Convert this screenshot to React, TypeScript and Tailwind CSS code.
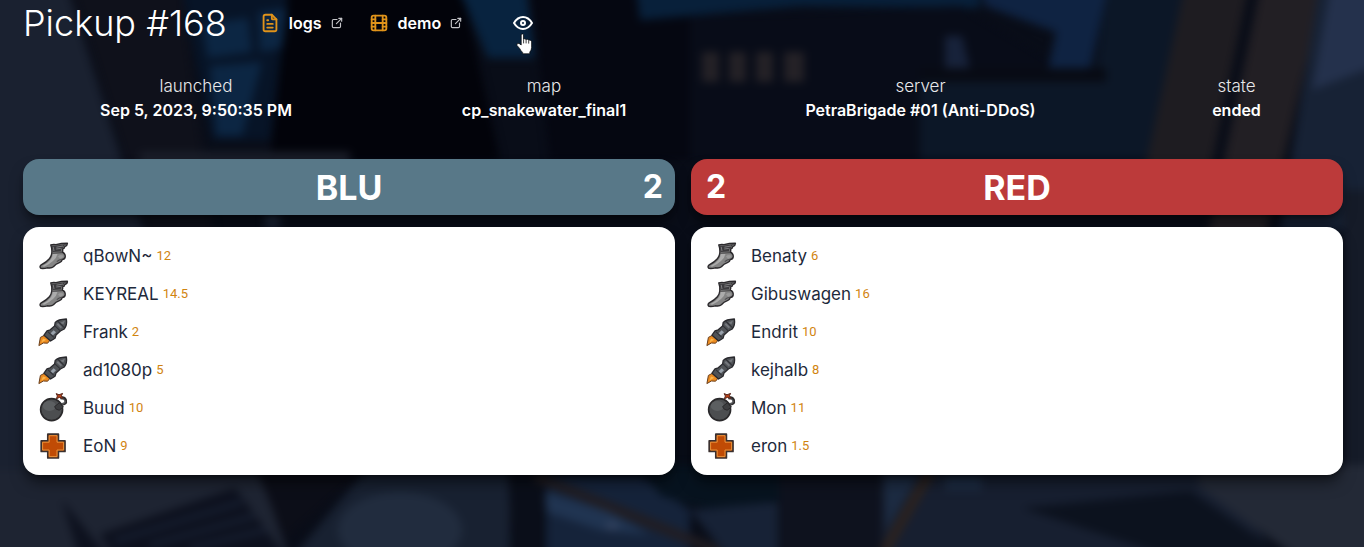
import React from "react";
import { TbExternalLink, TbEye, TbFileText, TbMovie } from "react-icons/tb";

type GameClass = "scout" | "soldier" | "demoman" | "medic";

interface Player {
  name: string;
  score: string;
  gameClass: GameClass;
}

const blu: Player[] = [
  { name: "qBowN~", score: "12", gameClass: "scout" },
  { name: "KEYREAL", score: "14.5", gameClass: "scout" },
  { name: "Frank", score: "2", gameClass: "soldier" },
  { name: "ad1080p", score: "5", gameClass: "soldier" },
  { name: "Buud", score: "10", gameClass: "demoman" },
  { name: "EoN", score: "9", gameClass: "medic" },
];

const red: Player[] = [
  { name: "Benaty", score: "6", gameClass: "scout" },
  { name: "Gibuswagen", score: "16", gameClass: "scout" },
  { name: "Endrit", score: "10", gameClass: "soldier" },
  { name: "kejhalb", score: "8", gameClass: "soldier" },
  { name: "Mon", score: "11", gameClass: "demoman" },
  { name: "eron", score: "1.5", gameClass: "medic" },
];

const details = [
  { label: "launched", value: "Sep 5, 2023, 9:50:35 PM" },
  { label: "map", value: "cp_snakewater_final1" },
  { label: "server", value: "PetraBrigade #01 (Anti-DDoS)" },
  { label: "state", value: "ended" },
];

function ScoutIcon() {
  return (
    <>
      <path
        d="M12.8 4 Q15 3 18 3.6 Q23 2.2 29.4 2.2 Q29.6 4.4 26.8 5.6 Q26.8 7.4 24.6 8 Q25 9.8 24.2 11 Q27.6 12.6 27.2 16 Q26.8 18.2 24 18.6 Q24 20.8 21.4 21.6 Q17.8 22.8 15.4 25.8 Q13.4 27.6 9.4 26.8 Q6 27.8 3 27.4 Q1.2 26 2.8 24.2 Q8.6 21.2 11.4 17.8 Q13.4 15.4 13.8 12 Q14.2 7.6 12.8 4 Z"
        fill="#858585"
        stroke="#2b292c"
        strokeWidth="1.4"
        strokeLinejoin="round"
      />
      <path d="M13.6 4.6 L18 4.4 L28.4 3 L25.6 5.2 L25.4 6.8 L23.4 7.6 L23.2 10.4 L14.6 11 Z" fill="#3c3b3e" />
      <path d="M15.2 5.8 L16 10 M18.4 6.2 L25 5 M18.2 8 L22.8 7.4" stroke="#858487" strokeWidth="0.9" fill="none" />
      <path d="M4.4 25 Q10 22.2 12.8 18.4 Q14.6 16 14.8 13 H19.4 Q18.6 17.2 15 20 Q10.6 23.8 6 25.8 Z" fill="#acacac" />
      <path d="M20 15.4 Q22.6 12.8 25.6 15 Q25 17.2 22 17.8 Z" fill="#9a9a9a" />
      <path d="M14.2 12.2 L24 11.6 M18.8 20.6 Q21 18.6 24 18.4" stroke="#4c4b4d" strokeWidth="1.1" fill="none" />
    </>
  );
}

function SoldierIcon() {
  return (
    <>
      <path
        d="M0.9 28.6 L2.4 20.4 L6.6 18.2 L12.2 23 L9.6 26.2 L5.4 26 Z"
        fill="#ec8b20"
        stroke="#6a3f1c"
        strokeWidth="1"
        strokeLinejoin="round"
      />
      <path d="M3.4 25.6 L5 21.6 L8.4 22.8 Z" fill="#fbb64c" />
      <path
        d="M6 18.2 L9 13.8 L12.2 12.8 L16.6 9 L17.2 5.4 Q20 2.4 28.4 2 Q29.4 8 26.2 12 L22.4 14 L18 18 L17 21.2 L12.6 24 Z"
        fill="#505357"
        stroke="#29292d"
        strokeWidth="1.3"
        strokeLinejoin="round"
      />
      <path d="M9.8 14.6 L15.8 20.4 M17 8.8 L22.2 13.8 M19.6 4 L26.6 10.8" stroke="#303237" strokeWidth="1.1" />
      <path d="M12.6 16.2 L15.6 13.2 L18 15.2 L15 18.2 Z" fill="#98a1ab" />
      <path d="M22.4 5.8 L27 3.4 L25.4 7.4 Z M18.6 7.4 L20 6 L24 10 L22.8 11.4 Z" fill="#74777c" />
    </>
  );
}

function DemomanIcon() {
  return (
    <>
      <circle cx="13.6" cy="16.6" r="11" fill="#4c4e50" stroke="#2a292b" strokeWidth="1.6" />
      <ellipse cx="11.4" cy="13" rx="6.6" ry="5" fill="#5c5f61" />
      <path d="M16.6 13.6 L21.4 9.8 L25.4 14 L21.2 17.2 Q17.6 17 16.6 13.6 Z" fill="#3d3e40" stroke="#2a292b" strokeWidth="1" />
      <path d="M23.4 11.4 Q28.6 11.4 27.6 7.2 Q26 3.8 22.2 5.2" fill="none" stroke="#2c2a2b" strokeWidth="2.8" />
      <path d="M24 11 Q27.6 10.8 27 7.8 Q26 5.4 23.4 5.8" fill="none" stroke="#75777a" strokeWidth="0.9" />
      <path d="M18.2 0.6 L21 1.8 L24.6 0.4 L23.4 2.8 L24.8 5.4 L21.4 4.4 L18.4 5.8 L19.4 3 Z" fill="#bb4218" stroke="#54261c" strokeWidth="1" />
    </>
  );
}

function MedicIcon() {
  return (
    <>
      <path
        d="M9.8 3.2 H20.4 V9.8 H27 V20.4 H20.4 V27 H9.8 V20.4 H3.2 V9.8 H9.8 Z"
        fill="#c04b05"
        stroke="#3a302f"
        strokeWidth="1.7"
        strokeLinejoin="round"
      />
      <path
        d="M11.2 4.7 H19 V11.2 H25.6 V19 H19 V25.6 H11.2 V19 H4.6 V11.2 H11.2 Z"
        fill="none"
        stroke="#e8923a"
        strokeWidth="1"
      />
    </>
  );
}

const classIcons: Record<GameClass, () => React.JSX.Element> = {
  scout: ScoutIcon,
  soldier: SoldierIcon,
  demoman: DemomanIcon,
  medic: MedicIcon,
};

function PlayerRow({ player }: { player: Player }) {
  const Icon = classIcons[player.gameClass];
  return (
    <li className="flex h-[38px] items-center gap-[15px]">
      <svg viewBox="0 0 30 30" className="size-[30px] shrink-0 overflow-visible" role="img" aria-label={player.gameClass}>
        <Icon />
      </svg>
      <span className="flex items-center gap-1">
        <a href="#player" className="text-[17px] leading-6 text-[#1e293b]">
          {player.name}
        </a>
        <span className="font-[Roboto,sans-serif] text-[13px] leading-6 text-[#d18410]">{player.score}</span>
      </span>
    </li>
  );
}

function PlayerList({ players }: { players: Player[] }) {
  return (
    <ul className="rounded-2xl bg-white px-[15px] py-[10px] shadow-lg shadow-black/50">
      {players.map((player) => (
        <PlayerRow key={player.name} player={player} />
      ))}
    </ul>
  );
}

function Backdrop() {
  return (
    <svg
      viewBox="0 0 1364 547"
      preserveAspectRatio="xMidYMid slice"
      className="absolute inset-0 -z-10 h-full w-full"
      aria-hidden="true"
    >
      <defs>
        <filter id="soft" x="-5%" y="-5%" width="110%" height="110%" colorInterpolationFilters="sRGB">
          <feGaussianBlur stdDeviation="4" />
        </filter>
      </defs>
      <rect width="1364" height="547" fill="#090d18" />
      <g filter="url(#soft)">
        <path d="M-20 -20 H65 L150 250 V560 H-20 Z" fill="#1a2130" />
        <path d="M70 -20 H180 L215 240 H150 Z" fill="#0f111b" />
        <path d="M180 -20 H290 L270 140 H212 Z" fill="#071427" />
        <path d="M202 24 L248 18 L252 52 L208 58 Z M258 12 L288 8 L282 48 L260 52 Z M210 66 L262 62 L242 136 L216 136 Z" fill="#0c2643" />
        <path d="M290 -20 H460 L500 160 H270 Z" fill="#02030a" />
        <path d="M455 -20 H525 L535 58 H488 Z" fill="#08233f" />
        <path d="M530 -20 H690 V160 H550 Z" fill="#050711" />
        <path d="M635 -20 H980 V8 L800 6 L640 20 Z" fill="#08203a" />
        <path d="M690 16 L960 6 L1050 60 V160 H690 Z" fill="#080c18" />
        <path d="M980 -20 H1110 L1090 70 H1048 L1056 32 L985 6 Z" fill="#0f2342" />
        <path d="M945 36 H962 L970 70 H945 Z" fill="#17223a" />
        <path d="M1108 -20 H1190 L1150 160 H920 V82 L1095 76 Z" fill="#0c1727" />
        <path d="M920 68 H1106 V82 H920 Z" fill="#080b14" />
        <path d="M1186 -20 H1250 L1202 210 H1136 Z" fill="#1e1c21" />
        <path d="M1262 -20 H1326 L1262 250 H1205 Z" fill="#221f24" />
        <path d="M1320 -20 H1390 V230 H1280 Z" fill="#172235" />
        <path d="M1332 -20 H1390 V60 L1312 90 Z" fill="#24314c" />
        <g fill="#242126">
          <rect x="702" y="52" width="17" height="30" />
          <rect x="729" y="52" width="17" height="30" />
          <rect x="756" y="52" width="17" height="30" />
          <rect x="784" y="52" width="20" height="30" />
        </g>
        <path d="M140 152 H350 V165 H140 Z" fill="#1a1e29" />
        <path d="M265 212 H280 V228 H265 Z" fill="#1c2638" />
        <path d="M-20 470 H260 L290 560 H-20 Z" fill="#1e2432" />
        <path d="M100 534 L235 488 L288 560 H115 Z M62 500 L110 560 H80 Z" fill="#0d111e" />
        <path d="M115 541 L242 502 M150 545 L255 516 M190 548 L266 530" stroke="#192235" strokeWidth="4" />
        <path d="M255 465 H370 L285 540 Z" fill="#0c0e18" />
        <path d="M370 465 H510 V560 H290 Z" fill="#182131" />
        <ellipse cx="400" cy="530" rx="62" ry="38" fill="#212c3e" />
        <path d="M508 465 H545 V560 H512 Z" fill="#0a0e19" />
        <path d="M546 475 H640 L690 510 V560 H546 Z" fill="#15233a" />
        <path d="M545 492 L610 512 L650 535 L600 530 L546 512 Z" fill="#203451" />
        <path d="M535 476 L720 552" stroke="#211d22" strokeWidth="10" />
        <ellipse cx="612" cy="526" rx="7" ry="4" fill="#33425e" />
        <path d="M640 465 H780 V500 Q715 518 660 495 Z" fill="#07131f" />
        <path d="M690 510 L778 502 V560 H730 Z" fill="#172236" />
        <path d="M779 465 H882 V560 H779 Z" fill="#0e121e" />
        <path d="M882 465 H1210 L1280 560 H882 Z" fill="#171f30" />
        <path d="M884 475 H918 L886 530 Z M945 475 H982 V490 H945 Z" fill="#1c2b42" />
        <path d="M930 472 L884 552" stroke="#2b221f" strokeWidth="10" />
        <path d="M1022 508 L1190 491 L1290 560 H1180 Z" fill="#0c121e" />
        <path d="M1200 465 H1390 V560 H1300 L1198 486 Z" fill="#232936" />
        <path d="M1343 190 H1390 V465 H1343 Z" fill="#151b28" />
      </g>
    </svg>
  );
}

function HandPointer() {
  return (
    <svg viewBox="0 0 17 22" className="pointer-events-none absolute top-[22px] left-[5px] h-[22px] w-[17px]" aria-hidden="true">
      <path
        d="M5.2 1.6 Q6.4 0.2 7.5 1.6 V6.2 Q8.8 5.2 10 6.6 Q11.4 5.6 12.6 7.2 Q14.2 6.6 15.6 8.4 V14.6 Q15.4 17.6 13.8 19 V20.8 H6.6 V19.4 Q5 18 3.6 15.4 L0.8 12.2 Q0.6 10 3 10.4 L5.2 12 Z"
        fill="#fff"
        stroke="#000"
        strokeWidth="0.7"
      />
      <path d="M7.6 6.4 V10.4 M10.1 7 V10.4 M12.7 7.6 V10.6" stroke="#111" strokeWidth="0.8" />
    </svg>
  );
}

export default function App() {
  return (
    <main className="relative isolate min-h-screen overflow-hidden pr-[21px] pb-8 pl-[23px] font-[Inter,sans-serif] text-white">
      <Backdrop />
      <header className="flex h-[46px] items-center">
        <h1 className="text-[36px] leading-[46px] font-light">Pickup #168</h1>
        <nav className="ml-8 flex items-center gap-6 font-semibold">
          <a href="#logs" className="flex items-center gap-2">
            <TbFileText size={22} className="text-[#e0931a]" />
            <span>logs</span>
            <TbExternalLink size={14} className="text-[#c4c4c8]" />
          </a>
          <a href="#demo" className="flex items-center gap-2">
            <TbMovie size={22} className="text-[#e0931a]" />
            <span>demo</span>
            <TbExternalLink size={14} className="text-[#c4c4c8]" />
          </a>
        </nav>
        <button type="button" aria-label="Show details" className="relative ml-12">
          <TbEye size={24} />
          <HandPointer />
        </button>
      </header>

      <dl className="mt-7 grid grid-cols-[346fr_334fr_403fr_213fr] gap-2 text-center leading-6">
        {details.map(({ label, value }) => (
          <div key={label}>
            <dt className="text-[17px] leading-6 font-light text-[#e8e8ea]">{label}</dt>
            <dd className="font-semibold">{value}</dd>
          </div>
        ))}
      </dl>

      <div className="mt-[37px] grid grid-cols-2 gap-4">
        <section className="grid gap-3">
          <h2 className="grid h-14 grid-cols-[1fr_auto_1fr] items-center rounded-2xl bg-[#587888] px-3 text-[32px] font-bold shadow-lg shadow-black/50">
            <span className="col-start-2 text-[34px]">BLU</span>
            <span className="text-right">2</span>
          </h2>
          <PlayerList players={blu} />
        </section>
        <section className="grid gap-3">
          <h2 className="grid h-14 grid-cols-[1fr_auto_1fr] items-center rounded-2xl bg-[#bc3a3a] px-[15px] text-[32px] font-bold shadow-lg shadow-black/50">
            <span>2</span>
            <span className="text-[34px]">RED</span>
          </h2>
          <PlayerList players={red} />
        </section>
      </div>
    </main>
  );
}
